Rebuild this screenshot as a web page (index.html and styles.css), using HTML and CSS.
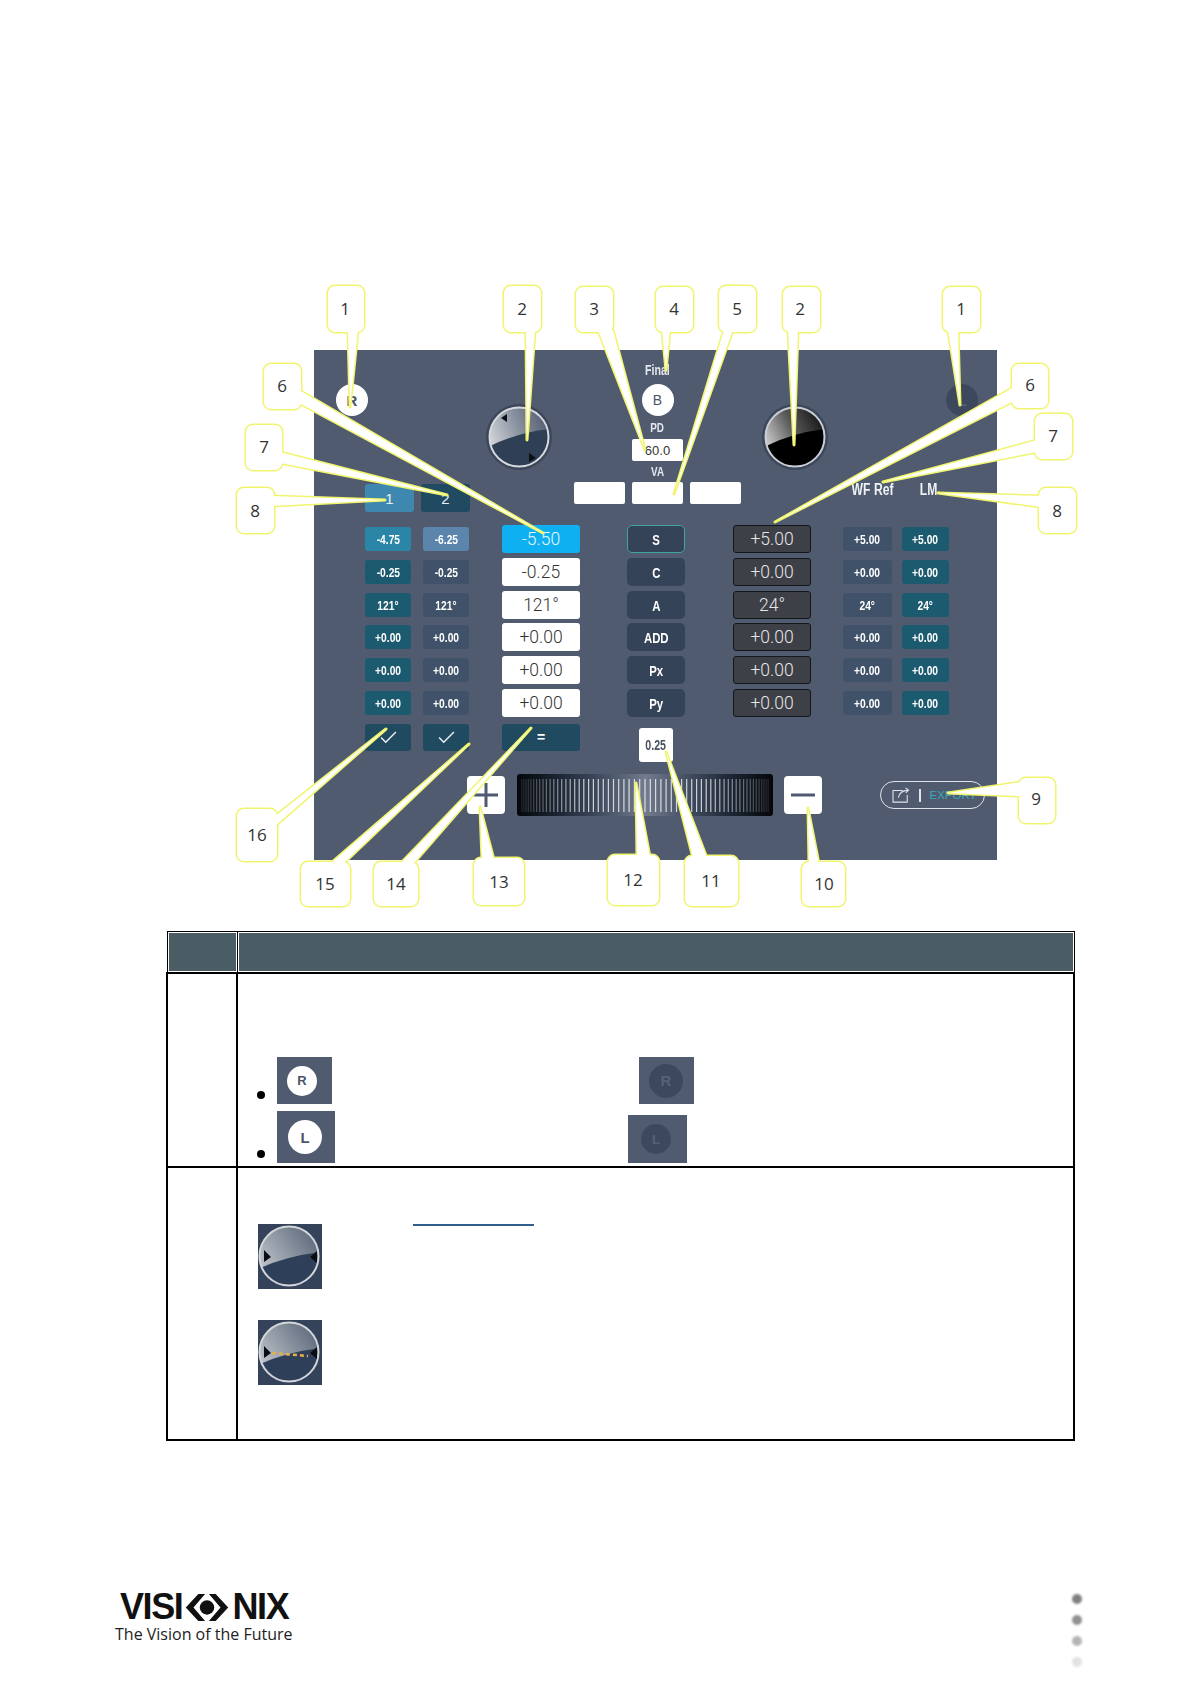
FILE: index.html
```html
<!DOCTYPE html>
<html lang="en">
<head>
    <meta charset="UTF-8">
    <title>Phoropter control panel</title>
    <link rel="stylesheet" href="styles.css">
</head>
<body>
<div class="page">
    <div class="panel">
        <div class="top">
            <div class="top-left">
                <div class="eye-row">
                    <div class="eye on">R</div>
                    <svg class="dial dial-r"><use href="#dial-blue"/></svg>
                </div>
                <div class="tabs">
                    <div class="tab tab-on">1</div>
                    <div class="tab tab-off">2</div>
                </div>
            </div>
            <div class="top-mid">
                <div class="lbl lbl-final"><span class="sq">Final</span></div>
                <div class="eye on eye-b">B</div>
                <div class="lbl lbl-pd"><span class="sq">PD</span></div>
                <div class="box box-pd">60.0</div>
                <div class="lbl lbl-va"><span class="sq">VA</span></div>
                <div class="va-row">
                    <div class="box"></div>
                    <div class="box"></div>
                    <div class="box"></div>
                </div>
            </div>
            <div class="top-right">
                <div class="eye-row">
                    <svg class="dial dial-l"><use href="#dial-black"/></svg>
                    <div class="eye off eye-l">L</div>
                </div>
                <div class="ref-labels">
                    <div class="ref-wf"><span class="sq">WF Ref</span></div>
                    <div class="ref-lm"><span class="sq">LM</span></div>
                </div>
            </div>
        </div>

        <div class="cols">
            <div class="col c-one">
                <div class="chip one-first"><span class="sq">-4.75</span></div>
                <div class="chip one"><span class="sq">-0.25</span></div>
                <div class="chip one"><span class="sq">121°</span></div>
                <div class="chip one"><span class="sq">+0.00</span></div>
                <div class="chip one"><span class="sq">+0.00</span></div>
                <div class="chip one"><span class="sq">+0.00</span></div>
                <div class="btn-low"><svg class="check" viewBox="0 0 18 14"><polyline points="1,7 6,12 17,1"/></svg></div>
            </div>
            <div class="col c-two">
                <div class="chip two-first"><span class="sq">-6.25</span></div>
                <div class="chip two"><span class="sq">-0.25</span></div>
                <div class="chip two"><span class="sq">121°</span></div>
                <div class="chip two"><span class="sq">+0.00</span></div>
                <div class="chip two"><span class="sq">+0.00</span></div>
                <div class="chip two"><span class="sq">+0.00</span></div>
                <div class="btn-low"><svg class="check" viewBox="0 0 18 14"><polyline points="1,7 6,12 17,1"/></svg></div>
            </div>
            <div class="col c-val">
                <div class="val val-on">-5.50</div>
                <div class="val">-0.25</div>
                <div class="val">121°</div>
                <div class="val">+0.00</div>
                <div class="val">+0.00</div>
                <div class="val">+0.00</div>
                <div class="btn-low btn-eq">=</div>
            </div>
            <div class="col c-name">
                <div class="name name-on"><span class="sq">S</span></div>
                <div class="name"><span class="sq">C</span></div>
                <div class="name"><span class="sq">A</span></div>
                <div class="name"><span class="sq">ADD</span></div>
                <div class="name"><span class="sq">Px</span></div>
                <div class="name"><span class="sq">Py</span></div>
                <div class="step"><span class="sq">0.25</span></div>
            </div>
            <div class="col c-obj">
                <div class="obj">+5.00</div>
                <div class="obj">+0.00</div>
                <div class="obj">24°</div>
                <div class="obj">+0.00</div>
                <div class="obj">+0.00</div>
                <div class="obj">+0.00</div>
            </div>
            <div class="col c-wf">
                <div class="chip two"><span class="sq">+5.00</span></div>
                <div class="chip two"><span class="sq">+0.00</span></div>
                <div class="chip two"><span class="sq">24°</span></div>
                <div class="chip two"><span class="sq">+0.00</span></div>
                <div class="chip two"><span class="sq">+0.00</span></div>
                <div class="chip two"><span class="sq">+0.00</span></div>
            </div>
            <div class="col c-lm">
                <div class="chip one"><span class="sq">+5.00</span></div>
                <div class="chip one"><span class="sq">+0.00</span></div>
                <div class="chip one"><span class="sq">24°</span></div>
                <div class="chip one"><span class="sq">+0.00</span></div>
                <div class="chip one"><span class="sq">+0.00</span></div>
                <div class="chip one"><span class="sq">+0.00</span></div>
            </div>
        </div>

        <div class="wheel-row">
            <div class="pm"><svg viewBox="0 0 24 24"><path d="M12 0V24M0 12H24"/></svg></div>
            <div class="wheel">
                <svg viewBox="0 0 256 42">
                    <path class="ticks" d="M128 5V38M133.3 5V38M138.6 5V38M143.9 5V38M149.1 5V38M154.3 5V38M159.5 5V38M164.6 5V38M169.7 5V38M174.7 5V38M179.6 5V38M184.4 5V38M189.2 5V38M193.8 5V38M198.3 5V38M202.8 5V38M207.1 5V38M211.3 5V38M215.3 5V38M219.2 5V38M222.9 5V38M226.6 5V38M230 5V38M233.3 5V38M236.4 5V38M239.3 5V38M242.1 5V38M244.7 5V38M247 5V38M249.2 5V38M251.2 5V38M122.7 5V38M117.4 5V38M112.1 5V38M106.9 5V38M101.7 5V38M96.5 5V38M91.4 5V38M86.3 5V38M81.3 5V38M76.4 5V38M71.6 5V38M66.8 5V38M62.2 5V38M57.7 5V38M53.2 5V38M48.9 5V38M44.7 5V38M40.7 5V38M36.8 5V38M33.1 5V38M29.4 5V38M26 5V38M22.7 5V38M19.6 5V38M16.7 5V38M13.9 5V38M11.3 5V38M9 5V38M6.8 5V38M4.8 5V38"/>
                </svg>
            </div>
            <div class="pm pm-minus"><svg viewBox="0 0 24 24"><path d="M0 12H24"/></svg></div>
            <div class="export">
                <svg viewBox="0 0 20 18"><path d="M12 4H1V17H17V9M7 12C8 7 11 4 18 3.500M15 1L18.500 3.500L15.500 6.500"/></svg>
                <span class="export-bar"></span>
                <span class="export-text">EXPORT</span>
            </div>
        </div>
    </div>

    <table class="legend">
        <tr>
            <th class="legend-no"></th>
            <th></th>
        </tr>
        <tr>
            <td></td>
            <td class="cell-eyes">
                <ul class="eye-list">
                    <li>
                        <div class="thumb th-r">
                            <div class="eye on eye-s">R</div>
                        </div>
                        <div class="thumb th-r th-r-off">
                            <div class="eye off eye-m">R</div>
                        </div>
                    </li>
                    <li>
                        <div class="thumb th-l">
                            <div class="eye on eye-m">L</div>
                        </div>
                        <div class="thumb th-l-off">
                            <div class="eye off eye-s">L</div>
                        </div>
                    </li>
                </ul>
            </td>
        </tr>
        <tr>
            <td></td>
            <td class="cell-dials">
                <div class="dial-line">
                    <svg class="dial-thumb"><use href="#dial-flat"/></svg>
                    <span class="ref-link"></span>
                </div>
                <svg class="dial-thumb dial-thumb-2"><use href="#dial-flat"/><use href="#dial-dots"/></svg>
            </td>
        </tr>
    </table>

    <div class="foot">
        <div class="brand">
            <div class="brand-name">
                <span>VISI</span>
                <svg viewBox="0 0 44 28"><circle cx="22" cy="14" r="7.500"/><path d="M13 0H20L8 14L20 28H13L0 14ZM31 0H24L36 14L24 28H31L44 14Z"/></svg>
                <span>NIX</span>
            </div>
            <div class="brand-line">The Vision of the Future</div>
        </div>
        <div class="dots">
            <span class="dot d1"></span>
            <span class="dot d2"></span>
            <span class="dot d3"></span>
            <span class="dot d4"></span>
        </div>
    </div>

    <!-- numbered callouts over the screenshot -->
    <svg class="callouts" viewBox="0 0 1190 1684">
        <defs>
            <linearGradient id="topShade" x1="0" y1="0.6" x2="1" y2="0.2">
                <stop offset="0" stop-color="#d4d7db"/>
                <stop offset="0.5" stop-color="#8a93a1"/>
                <stop offset="1" stop-color="#505a6e"/>
            </linearGradient>
            <linearGradient id="topShadeBlack" x1="0" y1="0.7" x2="1" y2="0.2">
                <stop offset="0" stop-color="#d8d8d8"/>
                <stop offset="0.5" stop-color="#5a5a5a"/>
                <stop offset="1" stop-color="#111"/>
            </linearGradient>
            <linearGradient id="flatShade" x1="0" y1="0.8" x2="1" y2="0.1">
                <stop offset="0" stop-color="#c6cad0"/>
                <stop offset="1" stop-color="#566376"/>
            </linearGradient>
            <clipPath id="dialClip"><circle cx="33" cy="33" r="29.500"/></clipPath>
            <clipPath id="flatClip"><circle cx="31" cy="32" r="29.500"/></clipPath>

            <symbol id="dial-blue" viewBox="0 0 66 66">
                <circle cx="33" cy="33" r="33" fill="#3c475a"/>
                <circle cx="33" cy="33" r="29.500" fill="url(#topShade)"/>
                <path d="M2 43Q30 29 64 25V66H2Z" fill="#2f4056" clip-path="url(#dialClip)"/>
                <circle cx="33" cy="33" r="29.500" fill="none" stroke="#d6d9dd" stroke-width="2"/>
                <path d="M15 14L21 10L21 18ZM50 54L43 58L43 49Z" fill="#0c0f14"/>
            </symbol>
            <symbol id="dial-black" viewBox="0 0 66 66">
                <circle cx="33" cy="33" r="33" fill="#3c475a"/>
                <circle cx="33" cy="33" r="29.500" fill="url(#topShadeBlack)"/>
                <path d="M2 43Q30 29 64 25V66H2Z" fill="#000" clip-path="url(#dialClip)"/>
                <circle cx="33" cy="33" r="29.500" fill="none" stroke="#c9ced6" stroke-width="2"/>
            </symbol>
            <symbol id="dial-flat" viewBox="0 0 64 65">
                <rect width="64" height="65" fill="#35435a"/>
                <circle cx="31" cy="32" r="29.500" fill="url(#flatShade)"/>
                <path d="M0 45Q28 32 64 28V65H0Z" fill="#2e4059" clip-path="url(#flatClip)"/>
                <circle cx="31" cy="32" r="29.500" fill="none" stroke="#d3d6da" stroke-width="2"/>
                <path d="M6 26L13 33L6 38ZM59 27L52 33L59 39Z" fill="#0a0d12"/>
            </symbol>
            <symbol id="dial-dots" viewBox="0 0 64 65">
                <path d="M14 33L50 36" fill="none" stroke="#e6b04a" stroke-width="2.500" stroke-dasharray="4 3"/>
            </symbol>

            <linearGradient id="tickFade">
                <stop offset="0" stop-color="#fff" stop-opacity="0.1"/>
                <stop offset="0.25" stop-color="#fff" stop-opacity="0.75"/>
                <stop offset="0.75" stop-color="#fff" stop-opacity="0.75"/>
                <stop offset="1" stop-color="#fff" stop-opacity="0.1"/>
            </linearGradient>

            <g id="shapes">
                <rect x="328" y="286" width="36" height="46" rx="7"/><polygon points="348,330 350,407 358,330"/>
                <rect x="504" y="286" width="37" height="46" rx="7"/><polygon points="526,330 527,440 535,330"/>
                <rect x="576" y="287" width="37" height="45" rx="7"/><polygon points="598,330 645,450 613,330"/>
                <rect x="656" y="287" width="37" height="45" rx="7"/><polygon points="662,330 666,370 670,330"/>
                <rect x="719" y="286" width="37" height="46" rx="7"/><polygon points="724,330 674,494 733,330"/>
                <rect x="783" y="287" width="37" height="45" rx="7"/><polygon points="788,330 794,445 798,330"/>
                <rect x="943" y="287" width="37" height="45" rx="7"/><polygon points="948,330 960,405 958,330"/>
                <rect x="264" y="364" width="37" height="45" rx="7"/><polygon points="299,390 543,533 299,403"/>
                <rect x="1012" y="364" width="36" height="44" rx="7"/><polygon points="1014,387 775,522 1014,401"/>
                <rect x="246" y="425" width="36" height="45" rx="7"/><polygon points="280,452 447,495 280,463"/>
                <rect x="1035" y="414" width="37" height="45" rx="7"/><polygon points="1037,440 883,482 1037,452"/>
                <rect x="237" y="488" width="37" height="45" rx="7"/><polygon points="272,496 385,500 272,506"/>
                <rect x="1039" y="488" width="37" height="45" rx="7"/><polygon points="1041,496 938,493 1041,507"/>
                <rect x="1019" y="778" width="36" height="45" rx="7"/><polygon points="1021,782 948,793 1021,796"/>
                <rect x="802" y="862" width="43" height="44" rx="7"/><polygon points="809,864 808,808 819,864"/>
                <rect x="685" y="856" width="53" height="50" rx="7"/><polygon points="693,858 666,752 707,858"/>
                <rect x="608" y="855" width="51" height="50" rx="7"/><polygon points="637,857 636,783 650,857"/>
                <rect x="474" y="858" width="50" height="47" rx="7"/><polygon points="482,860 480,807 494,860"/>
                <rect x="374" y="862" width="44" height="44" rx="7"/><polygon points="400,864 531,728 413,864"/>
                <rect x="301" y="862" width="49" height="44" rx="7"/><polygon points="330,864 469,744 343,864"/>
                <rect x="237" y="809" width="40" height="52" rx="7"/><polygon points="274,817 386,729 274,827"/>
            </g>
        </defs>
        <use href="#shapes" class="co-line"/>
        <use href="#shapes" class="co-fill"/>
        <g class="co-num">
            <text x="345" y="315">1</text>
            <text x="522" y="315">2</text>
            <text x="594" y="315">3</text>
            <text x="674" y="315">4</text>
            <text x="737" y="315">5</text>
            <text x="800" y="315">2</text>
            <text x="961" y="315">1</text>
            <text x="282" y="392">6</text>
            <text x="1030" y="391">6</text>
            <text x="264" y="453">7</text>
            <text x="1053" y="442">7</text>
            <text x="255" y="517">8</text>
            <text x="1057" y="517">8</text>
            <text x="1036" y="805">9</text>
            <text x="824" y="890">10</text>
            <text x="711" y="887">11</text>
            <text x="633" y="886">12</text>
            <text x="499" y="888">13</text>
            <text x="396" y="890">14</text>
            <text x="325" y="890">15</text>
            <text x="257" y="841">16</text>
        </g>
    </svg>
</div>
</body>
</html>
```
FILE: styles.css
```css
html, body {
    margin: 0;
    padding: 0;
    background: white;
}
.page {
    position: relative;
    width: 1190px;
    height: 1684px;
    overflow: hidden;
    padding-top: 350px;
    box-sizing: border-box;
    font-family: "Liberation Sans", Arial, sans-serif;
}
/* the panel labels are a condensed face, none is installed */
.sq {
    display: inline-block;
    transform: scaleX(0.76);
}

/* screenshot panel */
.panel {
    width: 683px;
    height: 510px;
    margin-left: 314px;
    background-color: #505b70;
}
.top {
    display: flex;
    height: 175px;
}
.top-left {
    width: 259px;
    display: flex;
    flex-direction: column;
    justify-content: space-between;
    padding-bottom: 13px;
    box-sizing: border-box;
}
.eye-row {
    display: flex;
    align-items: flex-start;
}
.top-left .eye {
    margin: 34px 0 0 22px;
}
.eye {
    width: 32px;
    height: 32px;
    border-radius: 50%;
    flex: none;
    display: flex;
    align-items: center;
    justify-content: center;
    font-size: 15px;
    font-weight: bold;
}
.eye.on {
    background-color: white;
    color: #4c5568;
}
.eye.off {
    background-color: #3d485d;
    color: #566176;
}
.eye-b {
    font-weight: normal;
    font-size: 14px;
}
.dial {
    width: 66px;
    height: 66px;
    flex: none;
}
.dial-r {
    margin: 54px 0 0 118px;
}
.dial-l {
    margin: 54px 0 0 20px;
}
.eye-l {
    margin: 34px 0 0 118px;
}
.tabs {
    display: flex;
    gap: 7px;
    padding-left: 51px;
}
.tab {
    width: 49px;
    height: 28px;
    border-radius: 3px;
    color: #e8eef3;
    font-size: 15px;
    display: flex;
    align-items: center;
    justify-content: center;
}
.tab-on {
    background-color: #3e88b0;
}
.tab-off {
    background-color: #1f4a62;
}
.top-mid {
    width: 169px;
    display: flex;
    flex-direction: column;
    align-items: center;
    padding-top: 12px;
    box-sizing: border-box;
}
.lbl {
    color: #e4e8ee;
    font-weight: bold;
    font-size: 13px;
    height: 14px;
    line-height: 14px;
}
.lbl-final {
    font-size: 14px;
    height: 16px;
    line-height: 16px;
    margin-bottom: 6px;
}
.lbl-pd {
    margin-top: 5px;
}
.lbl-va {
    margin-top: 4px;
}
.box {
    width: 51px;
    height: 22px;
    background-color: white;
    border-radius: 2px;
    color: #333;
    font-size: 13px;
    line-height: 23px;
    text-align: center;
}
.box-pd {
    margin-top: 4px;
}
.va-row {
    display: flex;
    gap: 7px;
    margin-top: 3px;
}
.top-right {
    width: 255px;
    display: flex;
    flex-direction: column;
    justify-content: space-between;
    padding-bottom: 25px;
    box-sizing: border-box;
}
.ref-labels {
    display: flex;
    margin-left: 101px;
    color: #eef1f5;
    font-weight: bold;
    font-size: 16px;
    line-height: 20px;
}
.ref-wf {
    width: 60px;
    text-align: center;
    white-space: nowrap;
}
.ref-lm {
    width: 52px;
    text-align: center;
}

/* value columns */
.cols {
    display: flex;
    align-items: flex-start;
    height: 237px;
}
.col {
    display: flex;
    flex-direction: column;
    gap: 4.75px;
    flex: none;
}
.c-one { width: 46px; margin-left: 51px; }
.c-two { width: 46px; margin-left: 12px; }
.c-val { width: 78px; margin-left: 33px; }
.c-name { width: 58px; margin-left: 47px; align-items: center; }
.c-obj { width: 78px; margin-left: 48px; }
.c-wf { width: 49px; margin-left: 32px; }
.c-lm { width: 47px; margin-left: 10px; }

.chip {
    height: 24px;
    margin: 2px 0;
    border-radius: 3px;
    color: white;
    font-size: 13.500px;
    font-weight: bold;
    line-height: 25px;
    text-align: center;
}
.one { background-color: #1b5a6f; }
.two { background-color: #3f5269; }
.one-first { background-color: #2a85a6; }
.two-first { background-color: #5b85ad; }
.btn-low {
    height: 27px;
    margin-top: 2.25px;
    border-radius: 3px;
    background-color: #204a60;
    display: flex;
    align-items: center;
    justify-content: center;
}
.check {
    width: 17px;
    height: 13px;
    fill: none;
    stroke: #eef4f8;
    stroke-width: 1.5;
}
.btn-eq {
    color: white;
    font-weight: bold;
    font-size: 14px;
}
.val, .obj {
    height: 28px;
    box-sizing: border-box;
    border-radius: 3px;
    font-family: Roboto, "Liberation Sans", sans-serif;
    font-weight: 300;
    font-size: 17.500px;
    line-height: 29px;
    text-align: center;
}
.val {
    background-color: white;
    color: #333;
}
.val-on {
    background-color: #0fb0f2;
    color: #e6f6fd;
}
.obj {
    background-color: #3d4046;
    border: 1px solid #14181d;
    color: #e6e6e6;
    line-height: 27px;
}
.name {
    width: 58px;
    height: 28px;
    box-sizing: border-box;
    border-radius: 5px;
    background-color: #344358;
    color: white;
    font-size: 15px;
    font-weight: bold;
    line-height: 29px;
    text-align: center;
}
.name-on {
    border: 1px solid #3fa59f;
    line-height: 27px;
}
.step {
    width: 34px;
    height: 34px;
    margin-top: 6.5px;
    border-radius: 3px;
    background-color: white;
    color: #4a5160;
    font-size: 14px;
    font-weight: bold;
    line-height: 34px;
    text-align: center;
    white-space: nowrap;
}

/* wheel row */
.wheel-row {
    display: flex;
    align-items: center;
    margin: 12px 0 0 153px;
}
.pm {
    width: 38px;
    height: 38px;
    padding: 7px;
    box-sizing: border-box;
    flex: none;
    border-radius: 4px;
    background-color: white;
}
.pm svg {
    display: block;
    fill: none;
    stroke: #4f5a70;
    stroke-width: 3;
}
.pm-minus {
    margin-left: 11px;
}
.wheel {
    width: 256px;
    height: 42px;
    margin-left: 12px;
    flex: none;
    border-radius: 3px;
    background: linear-gradient(90deg, #04060a 0, #1b2533 16%, #3f4b5e 32%, #737b8e 50%, #3f4b5e 68%, #1b2533 84%, #04060a 100%);
}
.wheel svg {
    display: block;
}
.ticks {
    fill: none;
    stroke: url(#tickFade);
    stroke-width: 1.2;
}
.export {
    width: 105px;
    height: 28px;
    margin-left: 58px;
    box-sizing: border-box;
    flex: none;
    border: 1px solid #dfe3ea;
    border-radius: 14px;
    display: flex;
    align-items: center;
    padding-left: 11px;
}
.export svg {
    width: 18px;
    height: 16px;
    fill: none;
    stroke: #dfe3ea;
    stroke-width: 1.2;
}
.export-bar {
    width: 1.5px;
    height: 13px;
    margin: 0 9px 0 9px;
    background-color: #dfe3ea;
}
.export-text {
    color: #3aa6b8;
    font-size: 11.5px;
}

/* legend table */
.legend {
    width: 909px;
    margin: 71px 0 0 166px;
    border-collapse: collapse;
    table-layout: fixed;
}
.legend th {
    height: 40px;
    padding: 0;
    border: 1px solid black;
    background-color: #4a5d64;
    box-shadow: inset 0 0 0 1px white;
}
.legend-no {
    width: 69px;
}
.legend td {
    padding: 0;
    border: 2px solid black;
    vertical-align: top;
}
.legend .cell-eyes {
    height: 194px;
    box-sizing: border-box;
}
.eye-list {
    list-style: none;
    margin: 0;
    padding: 83px 0 0 19px;
    display: flex;
    flex-direction: column;
    gap: 7px;
}
.eye-list li {
    display: flex;
    align-items: flex-end;
}
.eye-list li::before {
    content: "";
    width: 8px;
    height: 8px;
    margin: 0 12px 5px 0;
    border-radius: 50%;
    background-color: black;
}
.thumb {
    display: flex;
    align-items: center;
    width: 55px;
    height: 47px;
    padding-left: 10px;
    box-sizing: border-box;
    background-color: #505b70;
}
.th-r-off {
    margin-left: 307px;
}
.th-l {
    width: 58px;
    height: 52px;
    padding-left: 11px;
}
.th-l-off {
    display: flex;
    align-items: center;
    width: 59px;
    height: 48px;
    margin-left: 293px;
    padding-left: 13px;
    box-sizing: border-box;
    background-color: #505b70;
}
.eye-s {
    width: 30px;
    height: 30px;
    font-size: 13px;
}
.eye-m {
    width: 34px;
    height: 34px;
    font-size: 15px;
}
.legend .cell-dials {
    height: 273px;
    box-sizing: border-box;
    padding: 56px 0 0 20px;
}
.dial-line {
    display: flex;
    align-items: flex-start;
}
.dial-thumb {
    width: 64px;
    height: 65px;
    display: block;
}
.dial-thumb-2 {
    margin-top: 31px;
}
.ref-link {
    width: 121px;
    height: 2px;
    margin-left: 91px;
    background-color: #2f5f8a;
}

/* footer */
.foot {
    display: flex;
    justify-content: space-between;
    margin: 152px 0 0 115px;
    width: 967px;
}
.brand-name {
    display: flex;
    align-items: center;
    margin-left: 5px;
    color: #111;
    font-size: 36px;
    font-weight: bold;
    line-height: 28px;
    letter-spacing: -1.4px;
}
.brand-name svg {
    width: 44px;
    height: 27px;
    margin: 0 3px 0 3px;
    fill: #111;
}
.brand-line {
    margin-top: 3px;
    color: #222;
    font-family: "Open Sans", sans-serif;
    font-size: 16px;
    line-height: 20px;
}
.dots {
    display: flex;
    flex-direction: column;
    align-items: center;
    gap: 11px;
    padding-top: 1px;
}
.dot {
    width: 10px;
    height: 10px;
    border-radius: 50%;
    filter: blur(1.2px);
}
.d1 { background-color: #808080; }
.d2 { background-color: #909090; }
.d3 { background-color: #b4b4b4; }
.d4 { background-color: #e2e2e2; }

/* callouts */
.callouts {
    position: absolute;
    left: 0;
    top: 0;
    width: 1190px;
    height: 1684px;
    pointer-events: none;
}
.co-line {
    fill: none;
    stroke: #f1f56e;
    stroke-width: 3;
    stroke-linejoin: round;
}
.co-fill {
    fill: white;
}
.co-num text {
    fill: #333;
    font-family: "Open Sans", sans-serif;
    font-size: 17px;
    text-anchor: middle;
}
```
